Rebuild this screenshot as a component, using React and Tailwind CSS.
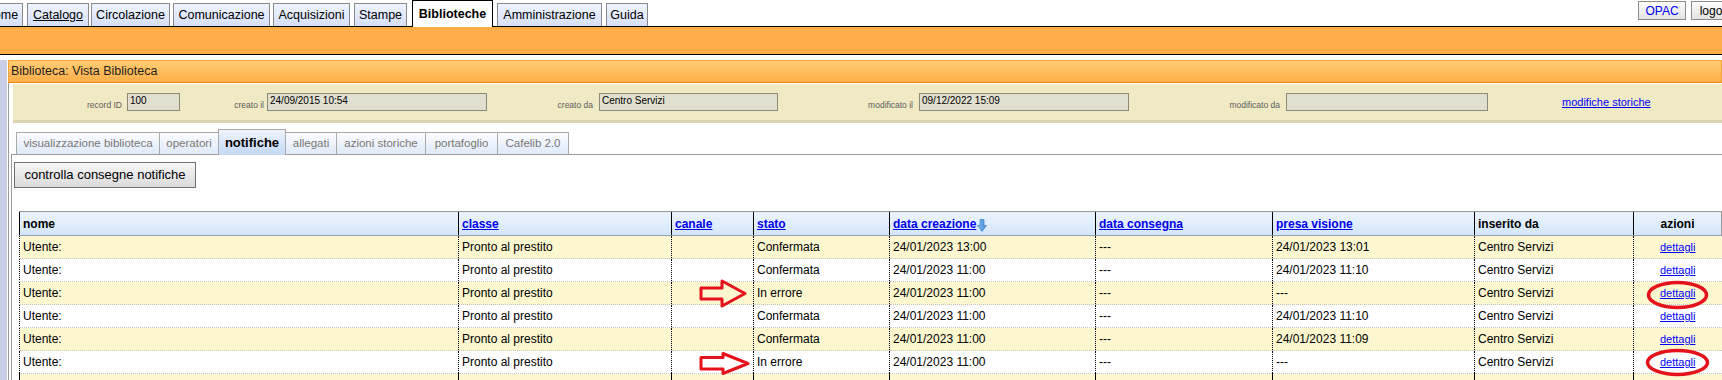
import React from 'react'

const topTabs = [
  { label: 'Home', cls: 'w-[43px] -ml-[20px]' },
  { label: 'Catalogo', cls: 'w-[62px] ml-[4px] underline' },
  { label: 'Circolazione', cls: 'w-[79px] ml-[2px]' },
  { label: 'Comunicazione', cls: 'w-[97px] ml-[3px]' },
  { label: 'Acquisizioni', cls: 'w-[77px] ml-[3px]' },
  { label: 'Stampe', cls: 'w-[53px] ml-[4px]' },
  { label: 'Biblioteche', cls: 'w-[81px] ml-[5px]', active: true },
  { label: 'Amministrazione', cls: 'w-[105px] ml-[4px]' },
  { label: 'Guida', cls: 'w-[42px] ml-[4px]' },
]

const subTabs = [
  { label: 'visualizzazione biblioteca', cls: 'w-[144px]' },
  { label: 'operatori', cls: 'w-[60px] -ml-px' },
  { label: 'notifiche', cls: 'w-[68px] -ml-px', active: true },
  { label: 'allegati', cls: 'w-[52px] -ml-px' },
  { label: 'azioni storiche', cls: 'w-[90px] -ml-px' },
  { label: 'portafoglio', cls: 'w-[73px] -ml-px' },
  { label: 'Cafelib 2.0', cls: 'w-[72px] -ml-px' },
]

const fields = [
  { label: 'record ID', value: '100', labelCls: 'w-[109px] mr-[5px]', boxCls: 'w-[53px]' },
  { label: 'creato il', value: '24/09/2015 10:54', labelCls: 'w-[84px] mr-[3px]', boxCls: 'w-[220px]' },
  { label: 'creato da', value: 'Centro Servizi', labelCls: 'w-[106px] mr-[6px]', boxCls: 'w-[179px]' },
  { label: 'modificato il', value: '09/12/2022 15:09', labelCls: 'w-[135px] mr-[6px]', boxCls: 'w-[210px]' },
  { label: 'modificato da', value: '', labelCls: 'w-[151px] mr-[6px]', boxCls: 'w-[202px]' },
]

const rows = [
  ['Confermata', '24/01/2023 13:00', '24/01/2023 13:01'],
  ['Confermata', '24/01/2023 11:00', '24/01/2023 11:10'],
  ['In errore', '24/01/2023 11:00', '---'],
  ['Confermata', '24/01/2023 11:00', '24/01/2023 11:10'],
  ['Confermata', '24/01/2023 11:00', '24/01/2023 11:09'],
  ['In errore', '24/01/2023 11:00', '---'],
]

const SortArrow = () => (
  <svg width="10" height="13" viewBox="0 0 10 13" className="inline-block ml-[1px] -mb-[2px]">
    <defs>
      <linearGradient id="sa" x1="0" y1="0" x2="1" y2="0">
        <stop offset="0" stopColor="#8cc0f0" />
        <stop offset="1" stopColor="#3f86d6" />
      </linearGradient>
    </defs>
    <path d="M3 0.5 H7 V6.5 H9.5 L5 12.5 L0.5 6.5 H3 Z" fill="url(#sa)" stroke="#4a8ad0" strokeWidth="0.8" />
  </svg>
)

const Field = ({ label, value, labelCls, boxCls }) => (
  <div className="flex items-center">
    <span className={`${labelCls} text-right text-[8.5px] text-[#5e5e5e] pt-[6px]`}>{label}</span>
    <div className={`${boxCls} h-[18px] bg-[#e0dfd0] border border-[#8b8a78] px-[2px] text-[10px] leading-[13px] text-black`}>
      {value}
    </div>
  </div>
)

const thBase = 'h-[24px] px-[3px] text-left font-bold text-[12px] bg-linear-to-b from-[#ecf4fd] to-[#d3e5f9] border-t border-b border-t-[#9a9a9a] border-b-[#8e9fb4]'
const linkTh = 'text-[#0000ee] underline'
const td = 'h-[23px] px-[3px] border-l border-l-black border-b border-dotted border-b-[#c4c4c4]'

export default function App() {
  return (
    <div className="relative w-[1722px] h-[380px] overflow-hidden bg-white text-black font-['Liberation_Sans',Arial,sans-serif]">
      {/* top menu */}
      <div className="h-[27px] flex items-end border-b border-black">
        {topTabs.map(t => (
          <div
            key={t.label}
            className={`${t.cls} shrink-0 flex items-center justify-center border-t border-l border-r ${
              t.active
                ? 'relative z-10 h-[27px] -mb-px bg-white border-black font-bold text-[12.5px]'
                : 'h-[23px] bg-linear-to-b from-[#eef3fe] to-[#d5e0f8] border-[#8a8a8a] text-[12.5px]'
            }`}
          >
            {t.label}
          </div>
        ))}
        <div className="ml-auto self-start flex gap-[5px] -mr-[19px] pt-[1px]">
          <div className="h-[19px] w-[48px] flex items-center justify-center border border-[#8c8c8c] bg-linear-to-b from-[#fdfdfd] to-[#e2e2e2] text-[12px] text-[#0000ee]">OPAC</div>
          <div className="h-[19px] w-[50px] flex items-center justify-center border border-[#8c8c8c] bg-linear-to-b from-[#fdfdfd] to-[#e2e2e2] text-[12px]">logout</div>
        </div>
      </div>

      {/* orange band */}
      <div className="h-[28px] bg-[#ffae4a] border-b border-black" />

      <div className="flex pt-[5px]">
        {/* left strip */}
        <div className="w-[7px] h-[330px] bg-[#c7cee6]" />
        <div className="flex-1 ml-[1px]">
          {/* panel header */}
          <div className="h-[23px] flex items-center pl-[2px] border border-[#f3a53c] border-b-[#e2870f] bg-linear-to-b from-[#ffcd72] to-[#ffad48] text-[12.5px] text-[#1e1e1e]">
            Biblioteca: Vista Biblioteca
          </div>

          <div className="border-l border-[#9a9a9a] pl-[2px] pt-[1px] h-[300px]">
            {/* info bar */}
            <div className="ml-[2px] h-[39px] flex items-center bg-[#efe9c4] border-b-[3px] border-[#dad4b0]">
              {fields.map(f => (
                <Field key={f.label} {...f} />
              ))}
              <a className="ml-[74px] text-[11px] text-[#0000ff] underline">modifiche storiche</a>
            </div>

            {/* sub tabs */}
            <div className="mt-[6px] h-[26px] flex items-end pl-[5px] border-b border-[#9a9a9a]">
              {subTabs.map(t => (
                <div
                  key={t.label}
                  className={`${t.cls} shrink-0 flex items-center justify-center border-t border-l border-r border-[#a9a9a9] ${
                    t.active
                      ? 'relative z-10 h-[26px] -mb-px bg-linear-to-b from-[#eef4fe] to-[#c3d8f5] font-bold text-[13px] text-black'
                      : 'h-[22px] bg-linear-to-b from-[#fbfcff] to-[#dfe9f8] text-[11.5px] text-[#777]'
                  }`}
                >
                  {t.label}
                </div>
              ))}
            </div>

            {/* tab content */}
            <div className="border-l border-[#9a9a9a] pl-[2px] pt-[7px] h-[240px]">
              <button className="h-[26px] w-[182px] border border-[#707070] bg-linear-to-b from-[#f6f6f6] to-[#dadada] text-[13px] text-black">
                controlla consegne notifiche
              </button>

              <table className="ml-[5px] mt-[23px] table-fixed border-collapse w-[1702px] text-[12px]">
                <colgroup>
                  <col className="w-[439px]" />
                  <col className="w-[213px]" />
                  <col className="w-[82px]" />
                  <col className="w-[136px]" />
                  <col className="w-[206px]" />
                  <col className="w-[177px]" />
                  <col className="w-[202px]" />
                  <col className="w-[159px]" />
                  <col className="w-[88px]" />
                </colgroup>
                <thead>
                  <tr>
                    <th className={`${thBase} border-l border-l-black`}>nome</th>
                    <th className={`${thBase} border-l border-l-black`}><span className={linkTh}>classe</span></th>
                    <th className={`${thBase} border-l border-l-black`}><span className={linkTh}>canale</span></th>
                    <th className={`${thBase} border-l border-l-black`}><span className={linkTh}>stato</span></th>
                    <th className={`${thBase} border-l border-l-black`}>
                      <span className={linkTh}>data creazione</span>
                      <SortArrow />
                    </th>
                    <th className={`${thBase} border-l border-l-black`}><span className={linkTh}>data consegna</span></th>
                    <th className={`${thBase} border-l border-l-black`}><span className={linkTh}>presa visione</span></th>
                    <th className={`${thBase} border-l border-l-black`}>inserito da</th>
                    <th className={`${thBase} border-l border-l-black border-r border-r-[#9a9a9a] !text-center`}>azioni</th>
                  </tr>
                </thead>
                <tbody>
                  {rows.map((r, i) => (
                    <tr key={i} className={i % 2 === 0 ? 'bg-[#fcf7cf]' : 'bg-white'}>
                      <td className={td}>Utente:</td>
                      <td className={td}>Pronto al prestito</td>
                      <td className={td}></td>
                      <td className={td}>{r[0]}</td>
                      <td className={td}>{r[1]}</td>
                      <td className={td}>---</td>
                      <td className={td}>{r[2]}</td>
                      <td className={td}>Centro Servizi</td>
                      <td className={`${td} text-center`}>
                        <a className="text-[11px] text-[#0000ff] underline">dettagli</a>
                      </td>
                    </tr>
                  ))}
                  <tr className="bg-[#fcf7cf]">
                    <td className="h-[23px] border-l border-l-black"></td>
                    <td className="border-l border-l-black"></td>
                    <td className="border-l border-l-black"></td>
                    <td className="border-l border-l-black"></td>
                    <td className="border-l border-l-black"></td>
                    <td className="border-l border-l-black"></td>
                    <td className="border-l border-l-black"></td>
                    <td className="border-l border-l-black"></td>
                    <td className="border-l border-l-black"></td>
                  </tr>
                </tbody>
              </table>
            </div>
          </div>
        </div>
      </div>

      {/* red annotations drawn over the table */}
      <svg className="absolute left-0 top-0 pointer-events-none" width="1722" height="380">
        <g fill="none" stroke="#e5121b" strokeWidth="3" strokeLinejoin="round">
          <path d="M701 288 L722 288 L722 281 L745 293.5 L722 306 L722 299 L701 299 Z" />
          <path d="M701 357.5 L723 357.5 L723 353.5 L748 363.5 L723 373.5 L723 369 L701 369 Z" />
          <ellipse cx="1677.5" cy="295" rx="29" ry="12.5" strokeWidth="3.5" />
          <ellipse cx="1677.5" cy="362.5" rx="30" ry="12" strokeWidth="3.5" />
        </g>
      </svg>
    </div>
  )
}
